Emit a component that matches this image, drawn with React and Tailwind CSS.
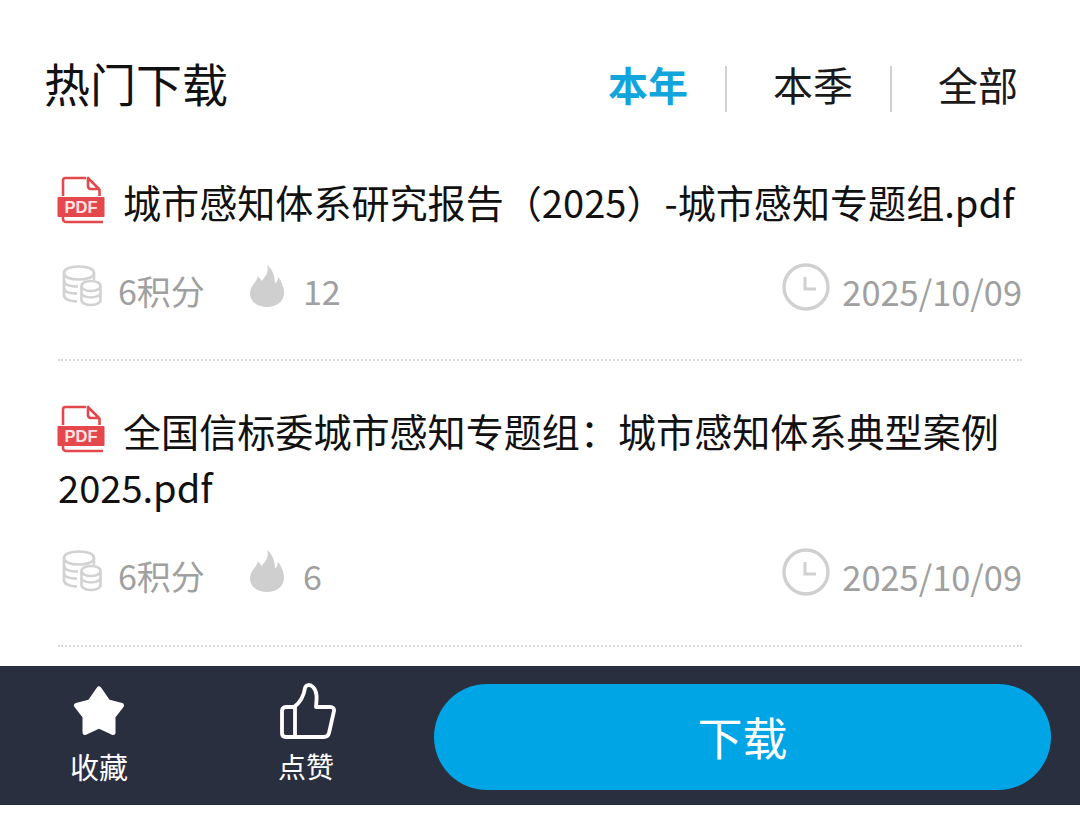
import React from 'react';

const PdfIcon = () => (
  <svg width="48" height="48" viewBox="0 0 48 48" className="-ml-[1px] -mt-[4px] shrink-0">
    <path d="M6 20V4.500A2.500 2.500 0 0 1 8.500 2H29" fill="none" stroke="#e4484c" strokeWidth="2.600" />
    <path d="M31 2V10Q31 13 34 13H42L31 2Z" fill="none" stroke="#e4484c" strokeWidth="2.600" strokeLinejoin="round" />
    <path d="M42.500 13V20" fill="none" stroke="#e4484c" strokeWidth="2.600" />
    <path d="M6 38V43A3 3 0 0 0 9 46H46" fill="none" stroke="#e4484c" strokeWidth="2.600" />
    <rect x="0.500" y="21" width="47" height="20" rx="1" fill="#e4484c" />
    <text x="24" y="36.500" textAnchor="middle" fontSize="16.500" fontWeight="700" fill="#ffe3e3" fontFamily="'Liberation Sans', sans-serif">PDF</text>
  </svg>
);

const CoinsIcon = () => (
  <svg width="40" height="42" viewBox="0 0 40 42" fill="none" stroke="#d2d2d2" strokeWidth="2.600" className="shrink-0 -mt-[10px]">
    <path d="M2 8C2 4 8 1.500 17 1.500C26 1.500 32 4 32 8C32 12 26 14.500 17 14.500C8 14.500 2 12 2 8Z" />
    <path d="M2 8V30C2 34 6 36 15 36.500" />
    <path d="M32 8V15" />
    <path d="M2 15.500C2 19.500 8 21.500 16 21.500" />
    <path d="M2 23C2 26.500 7 28.500 15 28.500" />
    <ellipse cx="29" cy="21" rx="9.500" ry="5" />
    <path d="M19.500 21V35C19.500 38 24 40 29 40C34 40 38.500 38 38.500 35V21" />
    <path d="M19.500 28C19.500 30.500 24 32.500 29 32.500C34 32.500 38.500 30.500 38.500 28" />
  </svg>
);

const FlameIcon = () => (
  <svg width="34" height="42" viewBox="0 0 34 42" className="shrink-0 -mt-[10px]">
    <path
      d="M17 0C19.500 7 15 12 11.500 16C10.500 14 9 12 7.500 11.500C8 16 0 20 0 28.500C0 36.500 7.500 42 17 42C26.500 42 34 36.500 34 28C34 22 31.500 16 28 12C28 15 27 17 25 18.500C25 11 22.500 4 17 0Z"
      fill="#cfcfcf"
    />
  </svg>
);

const ClockIcon = () => (
  <svg width="48" height="48" viewBox="0 0 48 48" fill="none" stroke="#d0d0d0" strokeWidth="3.400" className="shrink-0 -mt-[8px]">
    <circle cx="24" cy="24" r="22" />
    <path d="M23 14V26H34" strokeWidth="3" />
  </svg>
);

const StarIcon = () => (
  <svg width="52" height="50" viewBox="0 0 52 50" className="shrink-0">
    <path
      d="M26 3L35 16L48.500 19.500L40 30.500L40 46.500L26 40L12 46.500L12 30.500L3.500 19.500L17 16Z"
      fill="#fff"
      stroke="#fff"
      strokeWidth="5"
      strokeLinejoin="round"
    />
  </svg>
);

const ThumbIcon = () => (
  <svg width="56" height="56" viewBox="0 0 56 56" fill="none" stroke="#fff" strokeWidth="3.800" strokeLinejoin="round" className="ml-[3px] shrink-0">
    <path d="M14 24H6Q2 24 2 28V50Q2 54 6 54H44Q48 54 49 50L54 28Q54.500 24 50 24H36C36.500 17 38 9 33 4C30 1 26 1.500 25 5C24 12 21 19 14 24Z" />
    <path d="M15 24V54" />
  </svg>
);

const Meta = ({ score, heat, date }) => (
  <div className="flex items-center justify-between">
    <div className="flex items-center">
      <div className="ml-[4px] flex w-[188px] items-center gap-[16px]">
        <CoinsIcon />
        <span className="text-[34px] leading-[44px] text-[#a0a0a0]">{score}</span>
      </div>
      <div className="flex items-center gap-[19px]">
        <FlameIcon />
        <span className="text-[34px] leading-[44px] text-[#a0a0a0]">{heat}</span>
      </div>
    </div>
    <div className="flex items-center gap-[12px]">
      <ClockIcon />
      <span className="text-[34.400px] leading-[44px] text-[#a0a0a0]">{date}</span>
    </div>
  </div>
);

const tabs = ['本年', '本季', '全部'];

export default function App() {
  return (
    <div
      className="flex h-[824px] w-[1080px] flex-col overflow-hidden bg-white"
      style={{ fontFamily: "'Noto Sans CJK SC', 'Noto Sans', sans-serif" }}
    >
      <div className="flex h-[666px] flex-col overflow-hidden">
        <div className="flex items-start justify-between pl-[44px] pr-[62px] pt-[52px]">
          <h1 className="text-[46px] font-normal leading-[60px] text-[#111]">热门下载</h1>
          <div className="mt-[3px] flex items-center">
            {tabs.map((tab, i) => (
              <React.Fragment key={tab}>
                {i > 0 && <div className="ml-[37px] mr-[46px] mt-[11px] h-[46px] w-[2px] bg-[#d0d0d0]" />}
                <span className={`text-[40px] leading-[46px] ${i === 0 ? 'font-bold text-[#12a5dc]' : 'text-[#1a1a1a]'}`}>
                  {tab}
                </span>
              </React.Fragment>
            ))}
          </div>
        </div>

        <div className="px-[58px] pt-[62px]">
          <div className="h-[187px] border-b-2 border-dotted border-[#d8d8d8]">
            <div className="flex items-center gap-[18px] pt-[1px]">
              <PdfIcon />
              <span className="whitespace-nowrap text-[38.100px] leading-[54px] text-[#111]">城市感知体系研究报告（2025）-城市感知专题组.pdf</span>
            </div>
            <div className="mt-[40px]">
              <Meta score="6积分" heat="12" date="2025/10/09" />
            </div>
          </div>

          <div className="h-[286px] border-b-2 border-dotted border-[#d8d8d8] pt-[42px]">
            <div className="text-[38.100px] leading-[56px] text-[#111]">
              <div className="flex items-center gap-[18px]">
                <PdfIcon />
                <span className="whitespace-nowrap">全国信标委城市感知专题组：城市感知体系典型案例</span>
              </div>
              <div>2025.pdf</div>
            </div>
            <div className="mt-[39px]">
              <Meta score="6积分" heat="6" date="2025/10/09" />
            </div>
          </div>
        </div>
      </div>

      <div className="flex h-[139px] items-center bg-[#2a2f3f] pl-[70px] pr-[29px]">
        <button className="flex w-[58px] flex-col items-center gap-[12px] self-start pt-[20px] text-white">
          <StarIcon />
          <span className="whitespace-nowrap text-[29px] leading-[36px]">收藏</span>
        </button>
        <button className="ml-[149px] flex w-[58px] flex-col items-center gap-[9px] self-start pt-[17px] text-white">
          <ThumbIcon />
          <span className="whitespace-nowrap text-[28px] leading-[36px]">点赞</span>
        </button>
        <button className="ml-[99px] mt-[2px] flex h-[106px] flex-1 items-center justify-center rounded-full bg-[#00a5e5] text-[45px] text-white">
          下载
        </button>
      </div>
    </div>
  );
}
